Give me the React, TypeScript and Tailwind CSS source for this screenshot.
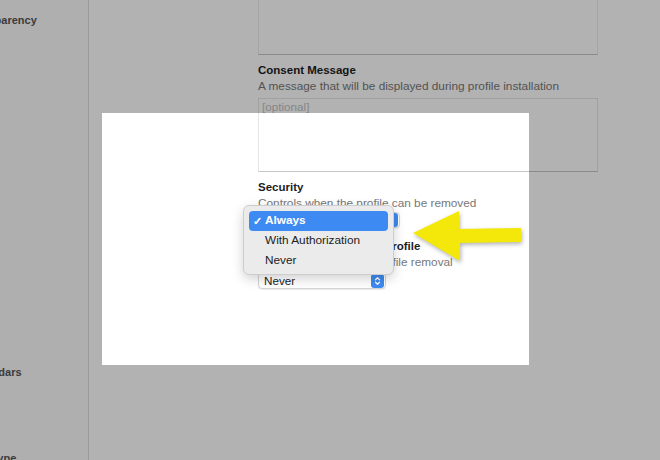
import React from 'react';

const font = { fontFamily: '"Liberation Sans", Arial, sans-serif' };

const Stepper: React.FC = () => (
  <span className="flex h-[14px] w-[13px] items-center justify-center rounded-[3px] bg-[#3d8bf2]">
    <svg width="7" height="10" viewBox="0 0 7 10" fill="none" stroke="white" strokeWidth="1.3" strokeLinecap="round" strokeLinejoin="round">
      <path d="M1.5 3.8 3.5 1.8 5.5 3.8" />
      <path d="M1.5 6.2 3.5 8.2 5.5 6.2" />
    </svg>
  </span>
);

const Select: React.FC<{ value: string; className: string }> = ({ value, className }) => (
  <div className={`flex items-center justify-between rounded-[4px] border border-[#d6d6d6] bg-white pl-[5px] pr-[1px] shadow-[0_1px_1px_rgba(0,0,0,0.08)] ${className}`}>
    <span className="text-[11.7px] leading-[14px] text-[#222]">{value}</span>
    <Stepper />
  </div>
);

const Field: React.FC<{ title: string; desc: string; className?: string }> = ({ title, desc, className }) => (
  <div className={className}>
    <div className="text-[11.5px] font-bold leading-[14px] text-[#1d1d1f]">{title}</div>
    <div className="mt-[2px] text-[11.8px] leading-[14px] text-[#777]">{desc}</div>
  </div>
);

export default function App() {
  return (
    <div style={font} className="relative flex h-[460px] w-[660px] overflow-hidden bg-white">
      {/* sidebar, scrolled off to the left */}
      <div className="w-[89px] shrink-0 overflow-hidden border-r border-[#dedede] bg-[#fbfbfb]">
        <div className="-ml-[90px] flex w-[180px] flex-col text-center text-[11px] font-bold leading-[14px] text-[#555]">
          <div className="ml-[2px] mt-[13px]">Transparency</div>
          <div className="-ml-[10px] mt-[338px]">Calendars</div>
          <div className="-ml-[18px] mt-[72px]">Link Type</div>
        </div>
      </div>

      {/* payload settings */}
      <div className="flex-1 pl-[169px]">
        <div className="w-[340px]">
          <div className="-mt-[20px] h-[75px] border border-[#ececec] border-b-[#c6c6c6] bg-white" />
          <Field className="mt-2" title="Consent Message" desc="A message that will be displayed during profile installation" />
          <div className="mt-[5px] h-[74px] border border-[#e6e6e6] border-b-[#c6c6c6] bg-white pl-[3px] pt-[1px] text-[11.7px] leading-[14px] text-[#c2c2c2]">
            [optional]
          </div>
          <Field className="mt-[8px]" title="Security" desc="Controls when the profile can be removed" />
          <div className="mt-[2px]">
            <Select value="Always" className="h-[16px] w-[142px]" />
          </div>
          <Field className="mt-[11px]" title="Automatically Remove Profile" desc="Settings for automatic profile removal" />
          <div className="mt-[3px]">
            <Select value="Never" className="h-[17px] w-[128px]" />
          </div>
        </div>
      </div>

      {/* dimmed backdrop with spotlight */}
      <div className="pointer-events-none absolute left-[102px] top-[113px] h-[252px] w-[427px] shadow-[0_0_0_2000px_rgba(0,0,0,0.3)]" />

      {/* open popup menu */}
      <div className="absolute left-[243px] top-[205px] flex w-[151px] flex-col rounded-[6px] border border-[#cdcdcd] bg-[#ebebeb] px-[5px] pb-[3px] pt-[5px] shadow-[0_4px_12px_rgba(0,0,0,0.18)]">
        <div className="flex h-[20px] items-center rounded-[4px] bg-[#3d8bf2] text-[11.8px] font-bold text-white">
          <span className="w-[16px] pl-[4px] text-[11px]">✓</span>
          <span>Always</span>
        </div>
        <div className="flex h-[20px] items-center pl-[16px] text-[11.8px] text-[#222]">With Authorization</div>
        <div className="flex h-[20px] items-center pl-[16px] text-[11.8px] text-[#222]">Never</div>
      </div>

      {/* callout arrow */}
      <svg className="absolute left-[405px] top-[205px] drop-shadow-[1px_2px_2px_rgba(0,0,0,0.3)]" width="125" height="65" viewBox="405 205 125 65">
        <polygon points="413,233 459,211 459,229 521,228 521,242 460,243 460,261" fill="#f3e80a" />
      </svg>
    </div>
  );
}
